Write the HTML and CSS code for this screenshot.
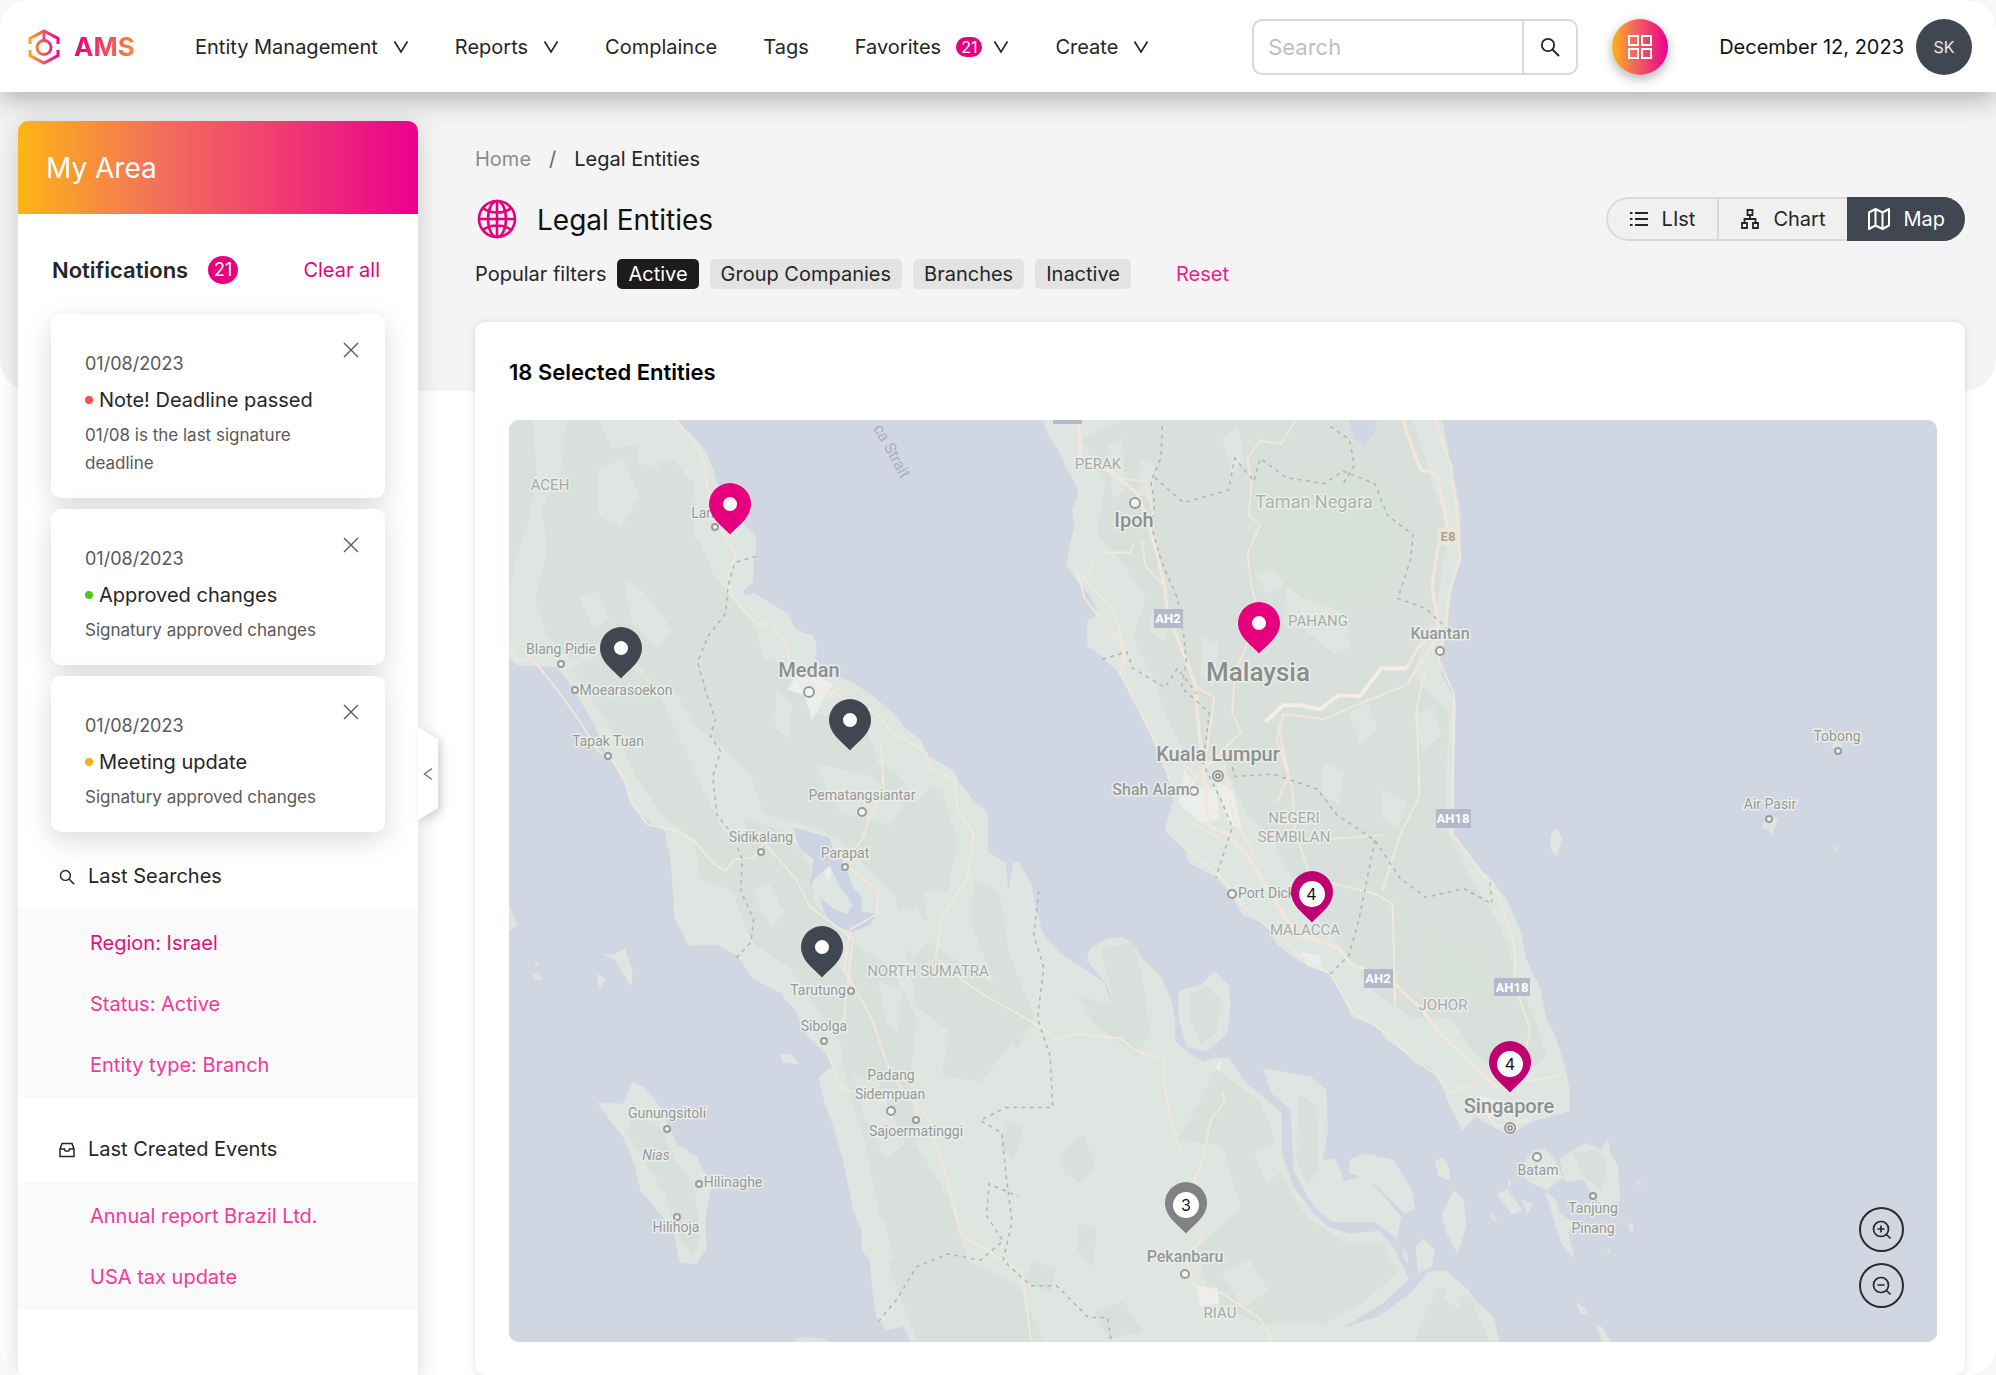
FILE: index.html
```html
<!DOCTYPE html>
<html lang="en">
<head>
<meta charset="utf-8">
<title>AMS – Legal Entities</title>
<meta name="viewport" content="width=device-width, initial-scale=1">
<link rel="stylesheet" href="styles.css">
</head>
<body>
<svg width="0" height="0" class="defs" aria-hidden="true">
  <defs>
    <symbol id="chev" viewBox="0 0 16 16"><path d="M1.500 2.500 8 13 14.500 2.500" fill="none" stroke="currentColor" stroke-width="1.700"/></symbol>
    <symbol id="glass" viewBox="0 0 20 20"><circle cx="8" cy="8" r="6.200" fill="none" stroke="currentColor" stroke-width="1.800"/><path d="m12.500 12.500 6.500 6.500" stroke="currentColor" stroke-width="2"/></symbol>
    <symbol id="cross" viewBox="0 0 16 16"><path d="m1 1 14 14M15 1 1 15" stroke="currentColor" stroke-width="1.400"/></symbol>
    <symbol id="pin" viewBox="0 0 42 52"><path d="M21 51.500C14 43.500 0 35 0 21a21 21 0 0 1 42 0c0 14-14 22.500-21 30.500z" fill="currentColor"/></symbol>
  </defs>
</svg>
<div class="app">
  <header class="topbar">
    <a class="logo" href="#">
      <svg width="32" height="36" viewBox="0 0 32 36" fill="none" stroke-width="3">
        <defs>
          <linearGradient id="hexa" gradientUnits="userSpaceOnUse" x1="1" y1="0" x2="31" y2="0"><stop offset="0" stop-color="#fbae17"/><stop offset=".5" stop-color="#f0506a"/><stop offset="1" stop-color="#ec008c"/></linearGradient>
        </defs>
        <path d="M2 15V9.500L16 2l14 7.500V15M2 21v5.500L16 34l14-7.500V21" stroke="url(#hexa)"/>
        <circle cx="16" cy="18.500" r="7" stroke="url(#hexa)"/>
        <path d="M16 2v9" stroke="#f0506a"/>
      </svg>
      <span>AMS</span>
    </a>
    <nav class="nav">
      <button type="button">Entity Management<svg class="chev"><use href="#chev"/></svg></button>
      <button type="button">Reports<svg class="chev"><use href="#chev"/></svg></button>
      <a href="#">Complaince</a>
      <a href="#">Tags</a>
      <button type="button">Favorites<span class="count">21</span><svg class="chev"><use href="#chev"/></svg></button>
      <button type="button">Create<svg class="chev"><use href="#chev"/></svg></button>
    </nav>
    <form class="search">
      <input type="search" placeholder="Search" aria-label="Search">
      <button type="button" aria-label="Run search"><svg width="20" height="20"><use href="#glass"/></svg></button>
    </form>
    <button class="apps" type="button" aria-label="Apps">
      <svg width="26" height="26" viewBox="0 0 26 26" fill="none" stroke="#fff" stroke-width="2"><path d="M2 2h9v9H2zM15 2h9v9h-9zM2 15h9v9H2zM15 15h9v9h-9z"/></svg>
    </button>
    <time class="today" datetime="2023-12-12">December 12, 2023</time>
    <button class="avatar" type="button">SK</button>
  </header>

  <div class="body">
    <aside class="sidebar">
      <h2 class="sidebar-head">My Area</h2>
      <button class="handle" type="button" aria-label="Collapse sidebar"><span><svg width="10" height="14" viewBox="0 0 10 14" fill="none" stroke="#777" stroke-width="1.500"><path d="M9 1.500 1.500 7 9 12.500"/></svg></span></button>
      <div class="notif-head">
        <h3>Notifications</h3><span class="badge">21</span><a href="#">Clear all</a>
      </div>
      <div class="notes">
        <article class="note">
          <button type="button" aria-label="Dismiss"><svg width="16" height="16"><use href="#cross"/></svg></button>
          <time>01/08/2023</time>
          <h4 class="red">Note! Deadline passed</h4>
          <p>01/08 is the last signature deadline</p>
        </article>
        <article class="note">
          <button type="button" aria-label="Dismiss"><svg width="16" height="16"><use href="#cross"/></svg></button>
          <time>01/08/2023</time>
          <h4 class="green">Approved changes</h4>
          <p>Signatury approved changes</p>
        </article>
        <article class="note">
          <button type="button" aria-label="Dismiss"><svg width="16" height="16"><use href="#cross"/></svg></button>
          <time>01/08/2023</time>
          <h4 class="amber">Meeting update</h4>
          <p>Signatury approved changes</p>
        </article>
      </div>
      <section class="group">
        <h3><svg width="16" height="16"><use href="#glass"/></svg>Last Searches</h3>
        <ul>
          <li><a class="current" href="#">Region: Israel</a></li>
          <li><a href="#">Status: Active</a></li>
          <li><a href="#">Entity type: Branch</a></li>
        </ul>
      </section>
      <section class="group">
        <h3><svg width="16" height="16" viewBox="0 0 16 16" fill="none" stroke="currentColor" stroke-width="1.500"><path d="M1 7 3 1.500h10L15 7v7.500H1zM1 7h4.500c0 3 5 3 5 0H15"/></svg>Last Created Events</h3>
        <ul>
          <li><a href="#">Annual report Brazil Ltd.</a></li>
          <li><a href="#">USA tax update</a></li>
        </ul>
      </section>
    </aside>

    <main class="main">
      <nav class="crumbs" aria-label="Breadcrumb"><a href="#">Home</a><span>/</span><span class="here">Legal Entities</span></nav>
      <div class="title-row">
        <svg width="40" height="40" viewBox="0 0 40 40" fill="none" stroke="#e6007e" stroke-width="2.600"><circle cx="20" cy="20" r="18"/><ellipse cx="20" cy="20" rx="9" ry="18"/><path d="M20 2v36M2 20h36M6 9c7 6 21 6 28 0M6 31c7-6 21-6 28 0"/></svg>
        <h1>Legal Entities</h1>
        <div class="views">
          <button type="button"><svg width="18" height="16" viewBox="0 0 18 16" stroke="currentColor" stroke-width="1.800"><path d="M5 2h13M5 8h13M5 14h13M0 2h2.500M0 8h2.500M0 14h2.500"/></svg>LIst</button>
          <button type="button"><svg width="18" height="20" viewBox="0 0 18 20" fill="none" stroke="currentColor" stroke-width="1.800"><path d="M6.500 1h5v5h-5zM1 14h5v5H1zM12 14h5v5h-5zM9 6v4M3.500 14v-4h11v4"/></svg>Chart</button>
          <button type="button" class="on"><svg width="24" height="24" viewBox="0 0 24 24" fill="none" stroke="currentColor" stroke-width="2" stroke-linejoin="round"><path d="M2 5.500 8.500 2l7 3.500L22 2v16.500L15.500 22l-7-3.500L2 22zM8.500 2v16.500M15.500 5.500V22"/></svg>Map</button>
        </div>
      </div>
      <div class="filters">
        <span>Popular filters</span>
        <button type="button" class="on">Active</button>
        <button type="button">Group Companies</button>
        <button type="button">Branches</button>
        <button type="button">Inactive</button>
        <a href="#">Reset</a>
      </div>
      <section class="panel">
        <h2>18 Selected Entities</h2>
        <div class="map">
          <svg class="geo" viewBox="509 420 1428 922" preserveAspectRatio="xMidYMid slice" role="img" aria-label="Map of Malaysia and Sumatra">
            <g transform="scale(1.273)">
              <defs>
                <clipPath id="landclip"><path id="landshape" d="M400 330H530L545 343 555 355 561 371 565 385 575 405 584 411 594 422V437L592 440V457L584 464V468L593 466 607 475 619 482 624 493 631 497 639 499 642 509 640 517 649 528 668 535 686 547 702 560 710 571 723 581 728 593 738 599 749 605 754 615 765 629 776 639V669L790 678 792 699 796 678 800 677 810 694 813 710 819 733 833 749 853 762 867 772 877 797 870 775 854 754 856 745 870 737 881 736 889 740 898 754 912 767 919 783 923 799V818L934 827 945 834 954 831 965 831 979 851 999 867 1007 875V906L1016 932 1032 953 1044 964 1060 969 1083 967 1094 979 1107 1005 1086 1024 1055 1043 1083 1034 1108 1016 1122 999 1136 998 1153 1013 1161 1024 1173 1034 1178 1054H715L710 1042 697 1045 689 1036 686 1020 683 989 677 983V967L670 950 662 911 655 886 648 867 643 846 655 837 649 828 641 821 634 814 626 796 613 780 592 769 579 751 563 742 541 743 530 722 527 677 522 652 512 647 495 631 490 614 477 593 466 568 455 549 445 533 437 524 408 523 400 518z
                M819 330 824 344 831 352 838 369 845 380 847 389 842 400 844 414 840 429 838 445 848 459 858 471 863 482 854 488V507L866 516 879 529 892 550 900 568 910 589 917 610 922 628 918 640 915 653 931 668 934 678 956 690 967 702 976 719 993 725 1004 743 1024 757 1044 765 1052 778 1063 800 1083 806 1088 816 1108 830 1125 840 1133 854 1138 867 1149 888 1159 877 1167 882 1185 892 1201 882 1225 875 1233 873V855L1228 833 1221 812 1215 801 1210 776 1199 754 1195 733 1184 707 1170 689 1161 682 1144 660 1141 652 1143 576 1144 552 1133 531 1131 518 1137 497 1138 482 1143 450 1148 440 1147 400 1140 367 1133 330z
                M469 866 490 867 496 850 505 853 512 861 518 869 532 899 547 908 559 933 554 958 555 981 547 993 534 992 529 967 518 953 503 935 499 917 490 894 479 880z
                M473 749 482 750 491 745 497 764 496 775 490 766 483 754zM469 765 476 769 471 778zM420 755l3 2-2 2zM418 765l5-1 3 5-7 1zM400 711 406 726 400 732zM613 828h8l7 8-13-1zM623 1054 629 1050 644 1051 652 1054z
                M926 778 943 774 954 763 965 774 967 788 964 812 948 826 932 822 926 799z
                M992 839 1030 846 1042 856 1043 890 1039 911 1049 910 1056 928 1069 924 1083 935 1101 956 1097 973 1080 960 1047 960 1034 950 1027 940 1016 919 1014 872 999 859z
                M1060 911 1072 906 1094 911 1108 932 1112 950 1103 953 1083 933 1066 923 1060 922z
                M1133 909 1137 913 1140 928 1130 924 1127 912zM1142 935l8 8 2 20-7 22-10-19-2-13zM1118 973 1127 982 1125 995 1114 1000 1112 979zM1102 979l4 8v6l-4-7z
                M1193 918 1205 903 1214 902 1222 912 1228 925 1215 935 1200 928zM1214 936l8 6 3 10 10 8-3 9 5 20-11-13zM1225 911 1236 903 1246 898 1258 903 1263 895 1265 906 1271 916 1273 943 1260 948 1249 937 1244 927 1229 928z
                M1176 938l8-4 12 17-9 3zM1170 950l7 10-5-2zM1184 925l3 4-2 5zM1195 942l9 4-4 8zM1279 961h4v7l-3-1zM1286 927l4 3-2 2zM1238 1023l9 6v4l-5-1zM1253 1040l5 2 8 12h-7z
                M1438 586l5-4 5 4-4 6zM1388 640l9 3-5 13-3-4-5-2zM1218 656l5-6 4 9-4 14-5-6zM1440 664l3 2-2 3zM876 770l3 3-2 3zM1262 980l3 2-1 3z"/></clipPath>
              </defs>
              <rect x="399" y="329" width="1126" height="727" fill="#d0d6e2"/>
              <use href="#landshape" fill="#dfe6e1"/>
              <g clip-path="url(#landclip)">
                <g fill="#d9e0db">
                  <path d="M400 330H418L422 372 415 410 405 440 400 470zM445 330H470L480 352 500 350 515 362 530 362 545 380 548 420 560 450 575 470 598 500 612 520 640 560 680 570 690 600 740 622 752 660 745 700 700 700 660 660 640 650 600 640 590 610 560 580 530 560 500 520 470 505 450 520 430 500 420 470 430 430 425 400 440 370z"/>
                  <path d="M448 525 480 510 520 545 545 575 560 610 580 640 620 655 636 680 640 710 670 740 700 760 720 800 715 850 720 900 745 940 760 990 800 1010 820 1054H720L700 1000 690 950 680 900 665 850 660 820 640 790 620 760 590 740 575 700 550 690 545 660 520 640 500 610 485 580z"/>
                  <path d="M700 690 725 700 730 740 760 760 790 780 795 820 770 850 740 845 745 810 720 790zM765 690l20 10 8 50 20 50-15 25-20-60-15-40z"/>
                  <path d="M865 745l25-5 8 30 5 40-10 22-15-30zM846 782l40 10 12 22-12 10-25-18z"/>
                  <path d="M955 840 990 865 1000 890 1005 920 1025 955 1055 975 1085 975 1098 1000 1070 1024 1040 1040 990 1040 950 1020 940 980 975 950 960 900 925 895 940 870zM1130 1010l25 8 15 36h-60z"/>
                  <path d="M850 345 880 330H1110L1125 380 1138 410 1130 470 1120 500 1110 530 1138 560 1135 650 1150 680 1180 730 1190 760 1205 800 1215 830 1190 850 1160 830 1140 800 1110 800 1080 780 1050 740 1020 700 1000 660 980 640 960 600 930 590 915 560 905 530 890 500 900 470 880 440 862 420 868 380z"/>
                  <path d="M498 875l20 10 12 25 15 20 5 40-5 20-12-20-10-30-18-30-12-20zM935 780l15-5 10 12-5 25-12 8-8-20zM1020 860l14 8 2 50-8 14-10-20zM1235 905l20-2 8 10-5 22-15-12z"/>
                </g>
                <g fill="#d7e1d8">
                  <path d="M990 400 1010 378 1040 365 1070 372 1092 385 1104 415 1100 445 1085 470 1050 480 1015 465 995 435zM1120 735l40 15 20 30-30 10-30-20z"/>
                </g>
                <g fill="#dfe6e1">
                  <path d="M470 370l20-10 12 30-14 25-18-10zM500 335l14 4 2 30-14-6zM545 400l14 8-4 20-10-6zM490 455l16 10 22 30-12 15-20-22zM455 470l14-6 10 22-12 8zM515 540l16 4 22 40 20 50 6 30-12-14-24-50zM590 480l14 12 8 28-12-2zM610 540l12 14-3 26-10-8zM560 600l12 10 14 40-6 16-14-22zM640 600l40 8 30 22-10 18-40-10zM700 600l14-4 16 22-10 12zM590 700l14-6 12 22-10 14zM655 730l12 10 2 30-12-12zM690 720l30-8 14 22-16 18zM690 770l18 8-2 34-10-10zM670 845l20 5 18 50-12 10-16-30zM735 860l20 10 2 30-16-8zM680 950l14 8 8 30-12 8zM740 900l20 20-5 30-16-16z"/>
                  <path d="M870 350l12-6 2 40-10 8zM895 360l12 4-2 30-10-6zM1010 460l14 10 30 10 8 28-14 6-24-20-16-4zM985 450l16-4 8 14-14 6zM905 480l14 4-4 20-12-8zM945 500l12 6-4 34-10-10zM1060 560l14-8 8 20-14 14zM1040 600l16 6-4 26-14-8zM1085 620l20 10-6 20-14-8zM960 345l12-10 6 28-10 8zM1110 560l16-4 6 22-14 12zM1020 740l16 10-8 14-10-8z"/>
                  <path d="M985 905l16-8 6 22-12 12zM960 1000l22-10 14 24-20 14zM1140 1004l10 4-4 20-12-8z"/>
                </g>
                <g fill="#d9e0db"><path d="M835 905l16-14 10 26-12 12-14-8zM848 960l14 6-4 30-12-14zM790 880l14 6-8 26-10-12zM810 990l20 6-5 20-18-8zM860 1030l22-8 16 24-28 6z"/></g>
                <g fill="#eceeed"><path d="M628 528l14 2 12 8-6 10-10 18-6-20-14-4zM648 665l6 2-2 24-4-2zM930 605l10 12 16 4 2 22-14 4-18-16zM955 615l14 6 6 30-10-4zM1022 748l14 2 4 14-12-4zM1162 860l12 4 8 14-14-2zM940 1010l16 2 2 12-16 2zM954 838l6-6-2 10z"/></g>
              </g>
              <path d="M1060 330h22l-3 12-8 8-8-6z" fill="#d0d6e2"/>
              <path d="M623 650 634 653 652 658 655 672 662 675 670 697 677 705V716L689 718 683 727 670 732 655 727 647 716 644 705 655 714 665 718 670 711 660 697 652 680 640 690 636 698 639 675 628 666z" fill="#ccd3e3"/>
              <g fill="none" stroke="#f3e7dc" stroke-width="1.500" stroke-linejoin="round">
                <path d="M531 330 548 350 554 366 556 390 564 412 573 428 578 437 572 450 573 466 583 478 597 492 604 488 618 505 621 528 632 540 655 545 688 560 702 576 715 583 728 592 731 604 750 612 752 636 765 655 760 690 740 720 735 752 756 770 770 780 806 800 815 805 830 817 845 812 880 816 892 825 915 833 914 850 920 880 927 905"/>
                <path d="M400 509 407 520 418 517 440 545 455 566 470 590 482 598 492 616 497 632 509 648 530 652 545 660 560 678 570 684 577 675 592 674 600 662 625 690 636 712 660 730 670 738 664 790 662 812M692 586 694 620 684 640 677 660 662 678 690 700 689 718 668 730 663 762 685 800 695 830 700 845 730 880 745 930 755 970 780 985 803 1000 810 1054M650 828 662 855 695 865 710 900M960 858 962 865 951 880 945 910 937 930 930 950 945 972 932 990 938 1010 960 1016 990 1036 1000 1054"/>
                <path d="M847 330 849 359 875 372 894 388 906 424 915 461 917 482 934 524 939 539 942 576 945 600 950 649 964 655 984 678 998 702 1018 733 1052 745 1062 758 1077 763 1094 771 1103 780 1117 793 1131 812 1150 830 1164 843 1178 856M1103 330 1105 340 1116 369 1129 373 1137 414 1129 432 1125 461 1130 492 1113 510 1105 525" stroke-width="2.400"/>
                <path d="M880 376 900 378 906 405M1018 330 1006 349 990 346 980 360 983 380 981 405 990 412 980 435 983 460 987 475 982 500 970 530 968 560 975 575 960 590 940 610M1127 330 1140 366 1144 400 1147 440 1138 466 1136 490 1130 518 1142 545 1141 655 1160 680 1178 705 1190 745 1190 775 1202 808 1196 840M1129 500 1105 538 1070 552 1040 565 1008 561 1003 580 1012 610 1003 630M1120 525 1113 555 1115 625 1100 655 1086 700M1086 656 1020 661 1030 690 1060 697 1080 702 1094 710 1096 790M1005 575 1015 620 1018 660M860 440 852 455 875 480 884 512 880 529 900 568 910 589 919 613M845 445 852 470 864 485 878 500 885 520M890 427 888 434 866 434M930 665 960 690 975 710 1020 750 1045 765 1063 795 1090 812 1110 832 1130 845 1138 858 1160 850M1198 850 1225 845M897 425 900 445 915 461M939 539 954 548 948 590"/>
                <path d="M930 600 950 620 970 615M940 630 965 640M935 645 960 660M962 600 968 640 985 670M940 610 925 625M1160 865 1175 885 1200 880M635 535 650 548 660 540"/>
                <path d="M994 567 1008 554 1020 554 1037 557 1052 546 1068 547 1085 525 1105 525" stroke-width="3" stroke="#f6ede6"/>
              </g>
              <g fill="none" stroke="#b0b6b2" stroke-width="1.200" stroke-dasharray="3 3.500">
                <path d="M594 437 577 442 572 460 570 482 556 500 548 520 555 545 562 565 558 578 566 590 560 610 563 640 575 655 583 675 582 700 592 722 590 740 578 753"/>
                <path d="M913 335 912 360 904 378 907 395 905 415 912 440 925 470 930 500 932 520 928 540 950 560 945 600 960 630 968 650 955 690M907 375 930 395 965 385 970 360 985 378 990 360 1010 375 1040 380 1055 370 1080 380 1090 405 1110 420 1108 440 1098 470 1120 478 1138 495M1045 335 1060 345 1064 365 1055 380M866 518 885 512 890 525 915 540 925 525 940 545M965 590 970 610 1000 608 1035 620 1050 640 1080 660 1100 690 1120 705 1150 698 1172 710 1170 690M1080 660 1068 720 1060 750 1045 765"/>
                <path d="M816 700 812 735 820 760 815 800 825 830 827 870 790 870 770 880 787 890 790 920 795 960 788 990 810 1010 830 1010 855 1035 870 1035 873 1054M690 1038 705 1020 720 995 745 985 770 990 788 975 775 955 777 930 800 940"/>
              </g>
            </g>
            <g fill="#b3b9ca"><path d="M1053 420h29v4h-29z"/><rect x="1154" y="609" width="29" height="19"/><rect x="1436" y="809" width="35" height="19"/><rect x="1364" y="969" width="29" height="19"/><rect x="1494" y="978" width="36" height="18"/></g>
            <rect x="1437" y="528" width="22" height="17" rx="5" fill="#ece6d6"/>
            <g class="lbl shield" text-anchor="middle"><text x="1168" y="623">AH2</text><text x="1453" y="823">AH18</text><text x="1378" y="983">AH2</text><text x="1512" y="992">AH18</text><text class="e8" x="1448" y="541">E8</text></g>
            <g class="dots">
              <circle cx="715" cy="527" r="3"/><circle cx="561" cy="664" r="3"/><circle cx="575" cy="690" r="3"/><circle cx="608" cy="756" r="3"/><circle cx="809" cy="692" r="5"/><circle cx="862" cy="812" r="4"/><circle cx="761" cy="852" r="3"/><circle cx="845" cy="867" r="3"/><circle cx="851" cy="991" r="3"/><circle cx="824" cy="1041" r="3"/><circle cx="891" cy="1111" r="4"/><circle cx="916" cy="1120" r="3"/><circle cx="667" cy="1129" r="3"/><circle cx="699" cy="1184" r="3"/><circle cx="677" cy="1217" r="3"/><circle cx="1135" cy="503" r="5"/><circle cx="1440" cy="651" r="4"/><circle cx="1194" cy="791" r="4"/><circle cx="1232" cy="894" r="4"/><circle cx="1185" cy="1274" r="4"/><circle cx="1537" cy="1157" r="4"/><circle cx="1593" cy="1196" r="3"/><circle cx="1838" cy="751" r="3"/><circle cx="1769" cy="819" r="3"/>
              <circle cx="1218" cy="776" r="5"/><circle cx="1218" cy="776" r="2"/><circle cx="1510" cy="1128" r="5"/><circle cx="1510" cy="1128" r="2"/>
            </g>
            <g class="lbl town" text-anchor="middle">
              <text x="714" y="518">Langsa</text><text x="561" y="654">Blang Pidie</text><text x="626" y="695">Moearasoekon</text><text x="608" y="746">Tapak Tuan</text><text x="862" y="800">Pematangsiantar</text><text x="761" y="842">Sidikalang</text><text x="845" y="858">Parapat</text><text x="818" y="995">Tarutung</text><text x="824" y="1031">Sibolga</text><text x="891" y="1080">Padang</text><text x="890" y="1099">Sidempuan</text><text x="916" y="1136">Sajoermatinggi</text><text x="667" y="1118">Gunungsitoli</text><text x="656" y="1160" font-style="italic">Nias</text><text x="733" y="1187">Hilinaghe</text><text x="676" y="1232">Hilihoja</text><text x="1278" y="898">Port Dickson</text><text x="1538" y="1175">Batam</text><text x="1593" y="1213">Tanjung</text><text x="1593" y="1233">Pinang</text><text x="1837" y="741">Tobong</text><text x="1770" y="809">Air Pasir</text>
            </g>
            <g class="lbl region" text-anchor="middle">
              <text x="550" y="490">ACEH</text><text x="1098" y="469">PERAK</text><text x="1318" y="626">PAHANG</text><text x="1294" y="823">NEGERI</text><text x="1294" y="842">SEMBILAN</text><text x="1305" y="935">MALACCA</text><text x="1443" y="1010">JOHOR</text><text x="928" y="976">NORTH SUMATRA</text><text x="1220" y="1318">RIAU</text>
            </g>
            <text class="lbl park" text-anchor="middle" x="1314" y="508">Taman Negara</text>
            <text class="lbl strait" transform="translate(873 428) rotate(61)">ca Strait</text>
            <g class="lbl city" text-anchor="middle"><text x="1440" y="639">Kuantan</text><text x="1151" y="795">Shah Alam</text><text x="1185" y="1262">Pekanbaru</text></g>
            <g class="lbl metro" text-anchor="middle"><text x="809" y="677">Medan</text><text x="1134" y="527">Ipoh</text><text x="1218" y="761">Kuala Lumpur</text><text x="1509" y="1113">Singapore</text></g>
            <text class="lbl country" text-anchor="middle" x="1258" y="681">Malaysia</text>
          </svg>
          <button class="pin pink" type="button" aria-label="Langsa" style="left:15.5%;top:12.3%"><svg><use href="#pin"/></svg><i></i></button>
          <button class="pin dark" type="button" aria-label="Blang Pidie" style="left:7.85%;top:27.9%"><svg><use href="#pin"/></svg><i></i></button>
          <button class="pin dark" type="button" aria-label="Medan" style="left:23.9%;top:35.7%"><svg><use href="#pin"/></svg><i></i></button>
          <button class="pin dark" type="button" aria-label="Tarutung" style="left:21.9%;top:60.3%"><svg><use href="#pin"/></svg><i></i></button>
          <button class="pin pink" type="button" aria-label="Malaysia" style="left:52.5%;top:25.2%"><svg><use href="#pin"/></svg><i></i></button>
          <button class="pin plum" type="button" style="left:56.2%;top:54.3%"><svg><use href="#pin"/></svg><b>4</b></button>
          <button class="pin plum" type="button" style="left:70.1%;top:72.8%"><svg><use href="#pin"/></svg><b>4</b></button>
          <button class="pin gray" type="button" style="left:47.4%;top:88.1%"><svg><use href="#pin"/></svg><b>3</b></button>
          <div class="zoom">
            <button type="button" aria-label="Zoom in"><svg width="20" height="20" viewBox="0 0 20 20" fill="none" stroke="currentColor" stroke-width="1.700"><circle cx="9" cy="9" r="7.500"/><path d="m14.500 14.500 4 4M5.500 9h7M9 5.500v7"/></svg></button>
            <button type="button" aria-label="Zoom out"><svg width="20" height="20" viewBox="0 0 20 20" fill="none" stroke="currentColor" stroke-width="1.700"><circle cx="9" cy="9" r="7.500"/><path d="m14.500 14.500 4 4M5.500 9h7"/></svg></button>
          </div>
        </div>
      </section>
    </main>
  </div>
</div>
</body>
</html>
```
FILE: styles.css
```css
:root {
  --pink: #e6007e;
  --slate: #414750;
  --ink: #262626;
  --brand: linear-gradient(90deg, #fdb515, #f3705a 35%, #ec008c);
}

* { box-sizing: border-box; margin: 0; padding: 0; }

body {
  background: #f7f7f7;
  color: var(--ink);
  font: 400 20px/28px Inter, "Open Sans", sans-serif;
}

button, input { font: inherit; color: inherit; border: 0; background: none; }
button { cursor: pointer; }
a { color: inherit; text-decoration: none; }
ul { list-style: none; }
svg { flex: none; }
.defs { position: absolute; }

.app {
  position: relative;
  z-index: 0;
  min-height: 100vh;
  display: flex;
  flex-direction: column;
  background: #fff;
  border-radius: 28px;
  overflow: hidden;
}

/* Grey backdrop behind the page heading */
.app::before {
  content: "";
  position: absolute;
  z-index: -1;
  inset: 0 0 auto;
  height: 391px;
  background: #f4f4f4;
  border-radius: 0 0 32px 32px;
}

/* Top bar */
.topbar {
  display: flex;
  align-items: center;
  height: 92px;
  padding: 2px 24px 0 28px;
  background: #fff;
  box-shadow: 0 4px 28px rgba(0, 0, 0, .34);
  white-space: nowrap;
}

.logo { display: flex; align-items: center; gap: 14px; width: 167px; font-size: 26px; font-weight: 700; }
.logo span { background: linear-gradient(90deg, #e6007e, #fa8a3c); background-clip: text; color: transparent; }

.nav { display: flex; align-items: center; gap: 46px; }
.nav button { display: flex; align-items: center; gap: 15px; }
.chev { width: 16px; height: 16px; }
.count { margin-right: -4px; padding: 0 5px; border-radius: 10px; background: var(--pink); color: #fff; font-size: 16px; line-height: 20px; }

.search { display: flex; width: 326px; height: 56px; margin-left: auto; border: 2px solid #d9d9d9; border-radius: 10px; }
.search input { flex: 1; min-width: 0; padding: 0 14px; font-size: 22px; outline: 0; }
.search input::placeholder { color: #bfbfbf; }
.search button { display: grid; place-items: center; width: 54px; border-left: 2px solid #d9d9d9; }

.apps, .avatar { display: grid; place-items: center; width: 56px; height: 56px; border-radius: 50%; }
.apps { margin: 0 51px 0 34px; background: var(--brand); box-shadow: 0 4px 12px rgba(0, 0, 0, .3); }
.today { color: #111; }
.avatar { margin-left: 12px; background: var(--slate); color: #e8e8e8; font-size: 16px; }

/* Page body */
.body { flex: 1; display: flex; gap: 57px; padding: 29px 31px 0 18px; }

.sidebar { position: relative; flex: 0 0 400px; background: #fff; border-radius: 10px 10px 0 0; box-shadow: 0 4px 24px rgba(0, 0, 0, .16); }
.sidebar-head { padding: 1px 28px 0; border-radius: 10px 10px 0 0; background: var(--brand); color: #fff; font-size: 28px; font-weight: 400; line-height: 92px; }

/* Collapse tab hanging off the sidebar's right edge */
.handle { position: absolute; top: 606px; left: 100%; filter: drop-shadow(4px 3px 5px rgba(0, 0, 0, .16)); }
.handle span { display: grid; place-items: center; width: 20px; height: 93px; background: #fff; clip-path: polygon(0 0, 100% 12px, 100% 81px, 0 100%); }

.notif-head { display: flex; align-items: center; padding: 42px 38px 30px 34px; }
.notif-head h3 { font-size: 22px; font-weight: 600; }
.badge { width: 30px; margin: 0 auto 0 20px; border-radius: 50%; background: var(--pink); color: #fff; font-size: 18px; text-align: center; }
.notif-head a { color: var(--pink); }

.notes { display: grid; gap: 11px; padding: 0 33px; }
.note { position: relative; padding: 36px 34px 21px; border-radius: 10px; background: #fff; box-shadow: 0 8px 28px rgba(0, 0, 0, .15); color: #595959; font-size: 17px; }
.note button { position: absolute; top: 28px; right: 26px; line-height: 0; }
.note time { display: block; font-size: 18px; }
.note h4 { display: flex; align-items: center; gap: 6px; margin: 6px 0 5px; color: var(--ink); font-size: 20px; font-weight: 400; line-height: 32px; white-space: nowrap; }
.note h4::before { content: ""; width: 8px; height: 8px; border-radius: 50%; background: currentColor; }
.note .red::before { background: #ff4d4f; }
.note .green::before { background: #52c41a; }
.note .amber::before { background: #faad14; }

.group h3 { display: flex; align-items: center; gap: 13px; padding: 1px 41px 0; font-size: 20px; font-weight: 400; line-height: 65px; }
.group { margin-top: 11px; }
.group + .group { margin-top: 18px; }
.group ul { padding: 4px 0 2px; background: #fafafa; }
.group a { display: block; padding-left: 72px; color: #f03a9b; line-height: 61px; }
.group .current { color: #e0107f; }

/* Main column */
.main { flex: 1; min-width: 0; }
.crumbs { display: flex; gap: 18px; padding-top: 24px; color: #666; }
.crumbs a { color: #8c8c8c; }
.crumbs .here { color: var(--ink); }

.title-row { display: flex; align-items: center; gap: 20px; margin-top: 23px; padding-left: 2px; }
h1 { padding-top: 2px; color: #111; font-size: 28px; font-weight: 400; line-height: 44px; }

.views { display: flex; height: 44px; margin-left: auto; border-radius: 22px; overflow: hidden; }
.views button { display: flex; align-items: center; gap: 14px; padding: 0 22px; border: solid #d9d9d9; border-width: 2px 0 2px 2px; background: #f0f0f0; }
.views button:first-child { border-radius: 22px 0 0 22px; }
.views .on { gap: 12px; padding: 0 20px 0 18px; border-color: var(--slate); background: var(--slate); color: #fff; }

.filters { display: flex; align-items: center; gap: 11px; margin-top: 17px; }
.filters button { padding: 1px 11px; border-radius: 5px; background: #e3e3e3; }
.filters .on { background: #1c1c1c; color: #fff; }
.filters a { margin-left: 34px; color: #ee1c8f; }

.panel { margin-top: 33px; padding: 36px 28px 33px 34px; border-radius: 10px; background: #fff; box-shadow: 0 1px 8px rgba(0, 0, 0, .12); }
.panel h2 { color: #000; font-size: 22px; font-weight: 600; }

/* Map */
.map { position: relative; aspect-ratio: 1428 / 922; margin-top: 34px; border-radius: 10px; background: #d0d6e2; overflow: hidden; }
.geo { display: block; width: 100%; height: 100%; }
.lbl { fill: #979797; stroke: #e9eeea; stroke-width: 3px; stroke-linejoin: round; paint-order: stroke; font-family: Roboto, sans-serif; font-size: 14px; }
.region { fill: #a9a9a9; font-size: 15px; }
.park { fill: #a9b5ab; font-size: 18px; }
.strait { fill: #a9adc4; stroke: none; font-size: 16px; }
.city { font-size: 16px; font-weight: 500; }
.metro { fill: #8f8f8f; font-size: 20px; font-weight: 500; }
.country { fill: #8c8c8c; font-size: 26px; font-weight: 500; }
.shield { fill: #fff; stroke: none; font-size: 13px; font-weight: 700; }
.e8 { fill: #aaa38f; }
.dots { fill: #f2f4f2; stroke: #9a9a9a; stroke-width: 2; }

.pin { position: absolute; width: 42px; height: 52px; transform: translate(-50%, -96%); }
.pin svg { display: block; width: 42px; height: 52px; }
.pin i, .pin b { position: absolute; left: 50%; top: 21px; border-radius: 50%; background: #fff; transform: translate(-50%, -50%); }
.pin i { width: 14px; height: 14px; }
.pin b { top: 23px; width: 26px; height: 26px; color: #111; font-size: 16px; font-weight: 400; line-height: 26px; text-align: center; }
.pink { color: var(--pink); }
.dark { color: var(--slate); }
.plum { color: #bf0070; }
.gray { color: #828282; }

.zoom { position: absolute; right: 33px; bottom: 34px; display: grid; gap: 11px; }
.zoom button { display: grid; place-items: center; width: 45px; height: 45px; border: 2px solid #2b2b2b; border-radius: 50%; }
```
